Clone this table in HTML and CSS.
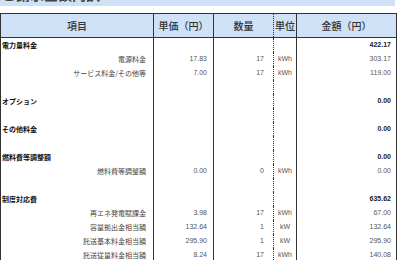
FILE: index.html
```html
<!DOCTYPE html>
<html lang="ja">
<head>
<meta charset="utf-8">
<link rel="stylesheet" href="styles.css">
</head>
<body>
<div class="title"><span>ご請求金額内訳</span></div>
<table class="bill">
  <colgroup>
    <col class="c-item"><col class="c-price"><col class="c-qty"><col class="c-unit"><col class="c-amt">
  </colgroup>
  <thead>
    <tr><th>項目</th><th>単価（円）</th><th class="qty">数量</th><th class="unit">単位</th><th>金額（円）</th></tr>
  </thead>
  <tbody>
    <tr class="sec"><td class="lbl">電力量料金</td><td></td><td class="qty"></td><td class="unit"></td><td class="amt">422.17</td></tr>
    <tr class="sub"><td class="lbl">電源料金</td><td class="num">17.83</td><td class="qty">17</td><td class="unit">kWh</td><td class="amt">303.17</td></tr>
    <tr class="sub"><td class="lbl">サービス料金/その他等</td><td class="num">7.00</td><td class="qty">17</td><td class="unit">kWh</td><td class="amt">119.00</td></tr>
    <tr class="blank"><td></td><td></td><td class="qty"></td><td class="unit"></td><td></td></tr>
    <tr class="sec"><td class="lbl">オプション</td><td></td><td class="qty"></td><td class="unit"></td><td class="amt">0.00</td></tr>
    <tr class="blank"><td></td><td></td><td class="qty"></td><td class="unit"></td><td></td></tr>
    <tr class="sec"><td class="lbl">その他料金</td><td></td><td class="qty"></td><td class="unit"></td><td class="amt">0.00</td></tr>
    <tr class="blank"><td></td><td></td><td class="qty"></td><td class="unit"></td><td></td></tr>
    <tr class="sec"><td class="lbl">燃料費等調整額</td><td></td><td class="qty"></td><td class="unit"></td><td class="amt">0.00</td></tr>
    <tr class="sub"><td class="lbl">燃料費等調整額</td><td class="num">0.00</td><td class="qty">0</td><td class="unit">kWh</td><td class="amt">0.00</td></tr>
    <tr class="blank"><td></td><td></td><td class="qty"></td><td class="unit"></td><td></td></tr>
    <tr class="sec"><td class="lbl">制度対応費</td><td></td><td class="qty"></td><td class="unit"></td><td class="amt">635.62</td></tr>
    <tr class="sub"><td class="lbl">再エネ発電賦課金</td><td class="num">3.98</td><td class="qty">17</td><td class="unit">kWh</td><td class="amt">67.00</td></tr>
    <tr class="sub"><td class="lbl">容量拠出金相当額</td><td class="num">132.64</td><td class="qty">1</td><td class="unit">kW</td><td class="amt">132.64</td></tr>
    <tr class="sub"><td class="lbl">託送基本料金相当額</td><td class="num">295.90</td><td class="qty">1</td><td class="unit">kW</td><td class="amt">295.90</td></tr>
    <tr class="sub"><td class="lbl">託送従量料金相当額</td><td class="num">8.24</td><td class="qty">17</td><td class="unit">kWh</td><td class="amt">140.08</td></tr>
  </tbody>
</table>
</body>
</html>
```

FILE: styles.css
```css
html, body {
  margin: 0;
  padding: 0;
  background: #fff;
  overflow: hidden;
}
body {
  font-family: "Noto Sans CJK JP", "Liberation Sans", sans-serif;
  color: #333;
}
.title {
  width: 395px;
  height: 20px;
  margin-top: -14px;
  background: #cfe1f6;
  font-size: 14px;
  font-weight: bold;
  line-height: 17px;
  color: #444;
  overflow: hidden;
  box-sizing: border-box;
  padding-left: 2px;
}
.bill {
  margin-top: 7px;
  width: 396px;
  border-collapse: collapse;
  table-layout: fixed;
  border: 1.5px solid #333;
}
.c-item { width: 153px; }
.c-price { width: 60px; }
.c-qty { width: 60px; }
.c-unit { width: 23px; }
.c-amt { width: 100px; }
.bill th {
  height: 23px;
  padding: 0;
  background: #cfe1f6;
  font-size: 10px;
  font-weight: 500;
  color: #333;
  border-left: 1.5px solid #333;
  border-bottom: 1.5px solid #333;
  text-align: center;
  white-space: nowrap;
}
.bill td {
  height: 14px;
  padding: 0;
  font-size: 7px;
  line-height: 14px;
  border-left: 1.5px solid #333;
  white-space: nowrap;
  color: #555;
}
.bill th.unit, .bill td.unit {
  border-left: 1px dotted #333;
  text-align: center;
}
.bill th.qty, .bill td.qty {
  text-align: center;
}
.bill td.qty { text-align: right; padding-right: 9px; }
.bill td.num { text-align: right; padding-right: 6px; font-family: "Liberation Sans", sans-serif; }
.bill td.qty, .bill td.unit, .bill td.amt { font-family: "Liberation Sans", sans-serif; }
.bill td.amt { text-align: right; padding-right: 5px; }
.sec td.lbl {
  text-align: left;
  padding-left: 1px;
  font-weight: bold;
  color: #111;
}
.sec td.amt { font-weight: bold; color: #222; }
.sub td.lbl {
  text-align: right;
  padding-right: 7px;
  color: #444;
}
```
